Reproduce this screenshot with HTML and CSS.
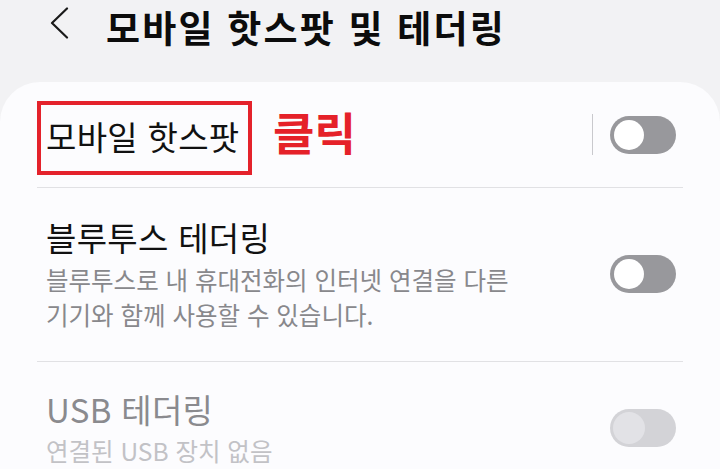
FILE: index.html
```html
<!DOCTYPE html>
<html lang="ko">
<head>
<meta charset="utf-8">
<link rel="stylesheet" href="styles.css">
</head>
<body>
<header class="header">
  <svg class="back" width="20" height="32" viewBox="0 0 20 32"><path d="M18 1.5 L3 16 L18 30.5" fill="none" stroke="#1a1a1a" stroke-width="2.2" stroke-linecap="round" stroke-linejoin="round"/></svg>
  <h1 class="title">모바일 핫스팟 및 테더링</h1>
</header>
<main class="card">
  <div class="row row-hotspot">
    <div class="redbox"><span class="label">모바일 핫스팟</span></div>
    <span class="click">클릭</span>
    <span class="spacer"></span>
    <span class="vline"></span>
    <span class="toggle"><span class="knob"></span></span>
  </div>
  <div class="divider"></div>
  <div class="row row-bt">
    <div class="texts">
      <div class="label">블루투스 테더링</div>
      <div class="sub">블루투스로 내 휴대전화의 인터넷 연결을 다른<br>기기와 함께 사용할 수 있습니다.</div>
    </div>
    <span class="toggle"><span class="knob"></span></span>
  </div>
  <div class="divider"></div>
  <div class="row row-usb">
    <div class="texts">
      <div class="label disabled">USB 테더링</div>
      <div class="sub disabled">연결된 USB 장치 없음</div>
    </div>
    <span class="toggle off"><span class="knob"></span></span>
  </div>
</main>
</body>
</html>
```
FILE: styles.css
```css
html, body {
  margin: 0;
  padding: 0;
}
body {
  width: 720px;
  height: 469px;
  overflow: hidden;
  background: #f2f2f4;
  font-family: "Noto Sans CJK KR", "Noto Sans", sans-serif;
  color: #111;
}
.header {
  height: 54px;
  display: flex;
  align-items: center;
  padding-left: 49px;
  margin-bottom: 28px;
}
.back {
  display: block;
  margin-top: -8px;
}
.title {
  margin: 0 0 0 37px;
  font-size: 37px;
  font-weight: 700;
  line-height: 54px;
  letter-spacing: 2.2px;
  color: #0c0c0c;
  white-space: nowrap;
}
.card {
  background: #fcfcfe;
  border-radius: 40px 40px 0 0;
  padding: 0 37px;
  height: 387px;
  box-sizing: border-box;
}
.row {
  display: flex;
  align-items: center;
}
.row-hotspot {
  padding-top: 19px;
  height: 105px;
  box-sizing: border-box;
  align-items: flex-start;
}
.redbox {
  box-sizing: border-box;
  width: 215px;
  height: 74px;
  border: 4px solid #e4222b;
  padding-left: 5px;
  display: flex;
  align-items: center;
}
.label {
  font-size: 33px;
  line-height: 44px;
  letter-spacing: 0.3px;
  color: #111;
}
.redbox .label {
  margin-top: -4px;
  white-space: nowrap;
}
.click {
  margin-left: 21px;
  font-size: 45px;
  font-weight: 700;
  line-height: 56px;
  color: #e52129;
  margin-top: 3px;
}
.spacer {
  flex: 1;
}
.vline {
  width: 1px;
  height: 41px;
  background: #c9c9cd;
  margin-top: 13px;
  margin-right: 17px;
}
.toggle {
  position: relative;
  width: 66px;
  height: 38px;
  border-radius: 19px;
  background: #98989c;
  margin-right: 7px;
  flex: none;
}
.row-hotspot .toggle {
  margin-top: 15px;
}
.knob {
  position: absolute;
  left: 4px;
  top: 4px;
  width: 30px;
  height: 30px;
  border-radius: 50%;
  background: #ffffff;
}
.toggle.off {
  background: #d3d3d7;
}
.toggle.off .knob {
  left: 3px;
  top: 3px;
  width: 32px;
  height: 32px;
  background: #e2e2e6;
}
.divider {
  height: 1px;
  background: #e1e1e4;
}
.texts {
  flex: 1;
  padding-left: 9px;
}
.row-bt {
  height: 173px;
  padding-bottom: 2px;
  box-sizing: border-box;
}
.sub {
  font-size: 24.5px;
  line-height: 35px;
  color: #88888c;
  margin-top: 3px;
}
.row-usb {
  padding-top: 25px;
}
.label.disabled {
  color: #8a8a8e;
}
.sub.disabled {
  color: #c2c2c6;
  margin-top: 2px;
}
```
